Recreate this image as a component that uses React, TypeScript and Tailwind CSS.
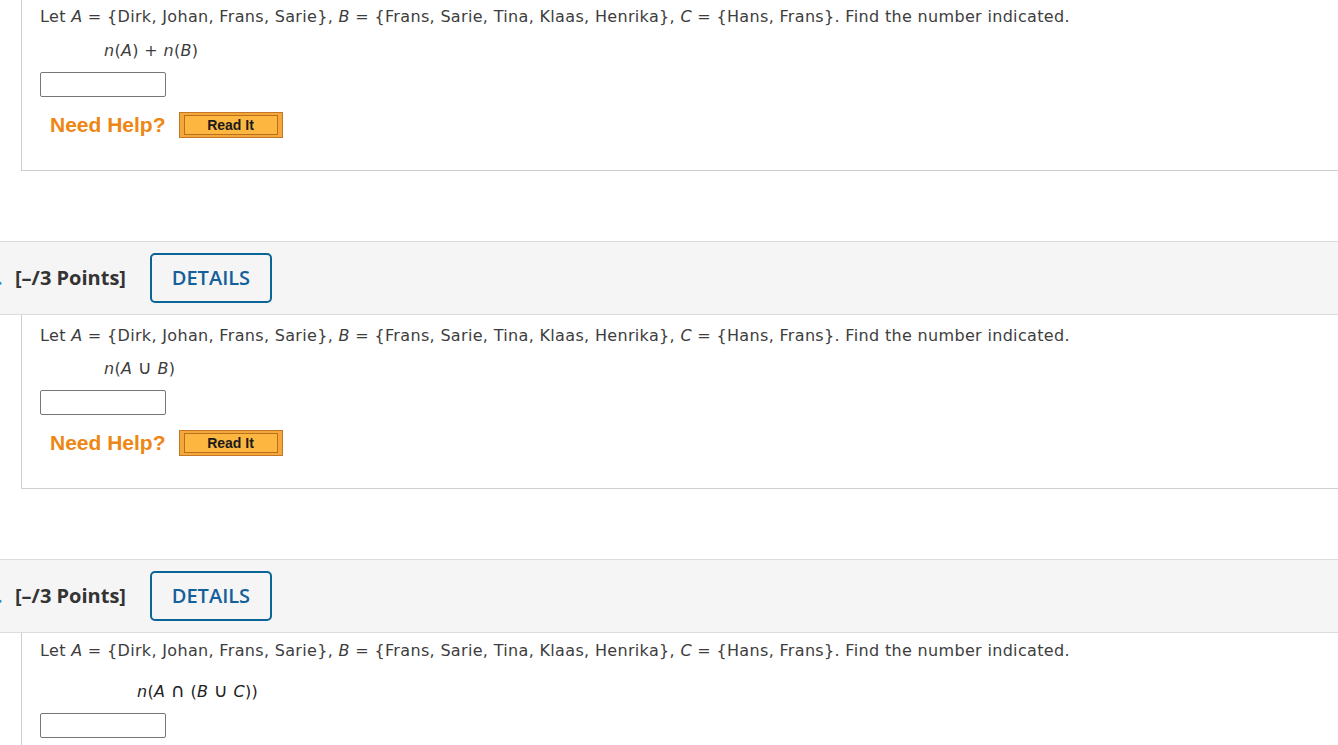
import React from "react"

const bodyFont = { fontFamily: '"DejaVu Sans", Verdana, sans-serif' }

const Intro = () => (
  <p className="text-[16px] leading-[20px] tracking-[0.33px] text-[#3d3d3d]" style={bodyFont}>
    Let <i>A</i> = {"{"}Dirk, Johan, Frans, Sarie{"}"}, <i>B</i> = {"{"}Frans, Sarie, Tina, Klaas, Henrika{"}"},{" "}
    <i>C</i> = {"{"}Hans, Frans{"}"}. Find the number indicated.
  </p>
)

const Op = ({ children }: { children: React.ReactNode }) => (
  <span className="text-[19px] leading-[16px]">{children}</span>
)

const AnswerBox = () => (
  <div className="w-[126px] h-[25px] border border-[#767676] rounded-[2px] bg-white" />
)

const NeedHelp = () => (
  <div className="flex items-center h-[26px] ml-[10px] mt-[15px] gap-[13px]">
    <span className="text-[21px] leading-[26px] font-bold text-[#ee8614]" style={{ fontFamily: '"Liberation Sans", Arial, sans-serif' }}>
      Need Help?
    </span>
    <div className="w-[104px] h-[26px] border border-[#c4772b] bg-[#f6a73a] px-[4px] py-[2px]">
      <div
        className="h-full border border-[#b8701f] bg-[#fdb740] flex items-center justify-center text-[14px] font-bold text-[#1a1a1a]"
        style={{ fontFamily: '"Liberation Sans", Arial, sans-serif' }}
      >
        Read It
      </div>
    </div>
  </div>
)

const Header = () => (
  <div className="h-[74px] bg-[#f5f5f5] border-y border-[#dcdcdc] flex items-center">
    <span className="text-[#3b87c8] text-[19px] font-bold ml-[-3px] w-[18px]" style={{ fontFamily: '"Open Sans", sans-serif' }}>
      .
    </span>
    <span className="text-[20px] font-bold text-[#333]" style={{ fontFamily: '"Open Sans", sans-serif' }}>
      [–/3 Points]
    </span>
    <button
      className="ml-[24px] w-[122px] h-[50px] border-2 border-[#0b6496] rounded-[5px] text-[20px] font-semibold text-[#14609a]"
      style={{ fontFamily: '"Open Sans", sans-serif' }}
    >
      DETAILS
    </button>
  </div>
)

export default function App() {
  return (
    <div className="w-[1338px] h-[745px] overflow-hidden bg-white">
      {/* question 1 (top cut off) */}
      <div className="ml-[21px] mt-[-4px] border-l border-b border-[#cfcfcf] pl-[18px] pt-[11px] pb-[32px]">
        <Intro />
        <p className="ml-[64px] mt-[14px] h-[20px] text-[16px] leading-[20px] tracking-[0.33px] text-[#3d3d3d]" style={bodyFont}>
          <i>n</i>(<i>A</i>) + <i>n</i>(<i>B</i>)
        </p>
        <div className="mt-[11px]">
          <AnswerBox />
        </div>
        <NeedHelp />
      </div>

      <div className="h-[70px]" />

      {/* question 2 */}
      <Header />
      <div className="ml-[21px] border-l border-b border-[#cfcfcf] pl-[18px] pt-[11px] pb-[32px]">
        <Intro />
        <p className="ml-[64px] mt-[13px] h-[20px] text-[16px] leading-[20px] tracking-[0.33px] text-[#3d3d3d]" style={bodyFont}>
          <i>n</i>(<i>A</i> <Op>∪</Op> <i>B</i>)
        </p>
        <div className="mt-[11px]">
          <AnswerBox />
        </div>
        <NeedHelp />
      </div>

      <div className="h-[70px]" />

      {/* question 3 */}
      <Header />
      <div className="ml-[21px] border-l border-[#cfcfcf] pl-[18px] pt-[8px] pb-[40px]">
        <Intro />
        <p className="ml-[97px] mt-[21px] h-[20px] text-[16px] leading-[20px] tracking-[0.33px] text-[#222]" style={bodyFont}>
          <i>n</i>(<i>A</i> <Op>∩</Op> (<i>B</i> <Op>∪</Op> <i>C</i>))
        </p>
        <div className="mt-[11px]">
          <AnswerBox />
        </div>
      </div>
    </div>
  )
}
